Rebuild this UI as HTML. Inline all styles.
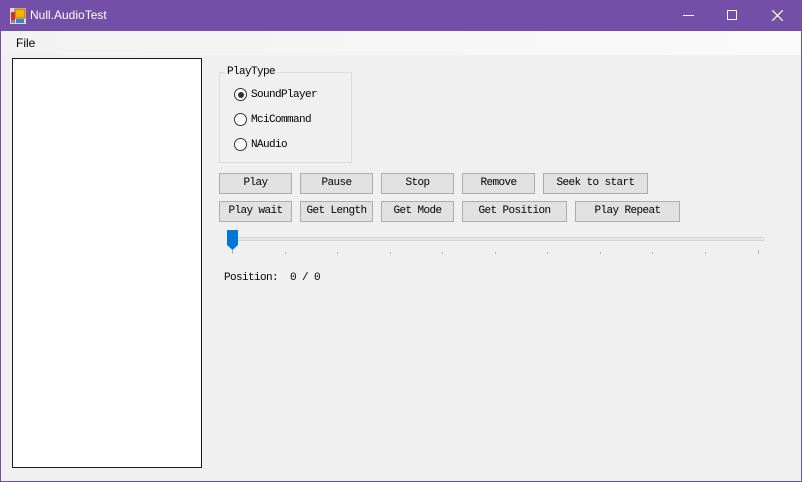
<!DOCTYPE html>
<html><head><meta charset="utf-8"><style>
*{margin:0;padding:0;box-sizing:border-box}
body{width:802px;height:482px;background:#f0f0f0;position:relative;overflow:hidden;font-family:"Liberation Mono",monospace;font-size:11px;letter-spacing:-0.6px;color:#000}
.a{position:absolute}
.title{left:0;top:0;width:802px;height:31px;background:#744fa8;color:#fff;font-family:"Liberation Sans",sans-serif;font-size:12px;letter-spacing:0}
.menu{left:1px;top:31px;width:800px;height:24px;background:linear-gradient(90deg,#f2f2f2,#fafafa);font-family:"Liberation Sans",sans-serif;font-size:12px;letter-spacing:0}
.btn{position:absolute;height:21px;background:#e1e1e1;border:1px solid #adadad;text-align:center;line-height:19px}
.rb{position:absolute;width:13px;height:13px;border:1px solid #333;border-radius:50%;background:#fff}
</style></head><body>
<div class="a title">
 <svg class="a" style="left:10px;top:8px" width="16" height="16"><rect x="0" y="0" width="16" height="16" fill="#d8d8e8"/><rect x="5" y="1" width="10" height="9" fill="#f4b400" stroke="#b07000"/><rect x="1" y="4" width="4" height="8" fill="#d03030"/><rect x="6" y="11" width="8" height="4" fill="#4080d0"/><rect x="1" y="12" width="4" height="3" fill="#888"/></svg>
 <div class="a" style="left:30px;top:8px">Null.AudioTest</div>
 <div class="a" style="left:683px;top:15px;width:11px;height:1px;background:#fff"></div>
 <div class="a" style="left:727px;top:10px;width:10px;height:10px;border:1px solid #fff"></div>
 <svg class="a" style="left:772px;top:10px" width="11" height="11"><path d="M0 0L11 11M11 0L0 11" stroke="#fff" stroke-width="1.2"/></svg>
</div>
<div class="a" style="left:0;top:31px;width:1px;height:451px;background:#744fa8"></div>
<div class="a" style="right:0;top:31px;width:1px;height:451px;background:#744fa8"></div>
<div class="a" style="left:0;top:481px;width:802px;height:1px;background:#744fa8"></div>
<div class="a menu"><div class="a" style="left:15px;top:5px">File</div></div>
<div class="a" style="left:12px;top:58px;width:190px;height:410px;background:#fff;border:1px solid #1a1a1a"></div>
<div class="a" style="left:219px;top:72px;width:133px;height:91px;border:1px solid #dcdcdc"></div>
<div class="a" style="left:225px;top:65px;background:#f0f0f0;padding:0 2px;line-height:14px">PlayType</div>
<div class="rb" style="left:234px;top:88px"><div class="a" style="left:2.5px;top:2.5px;width:6px;height:6px;border-radius:50%;background:#333"></div></div>
<div class="a" style="left:251px;top:88px;line-height:15px">SoundPlayer</div>
<div class="rb" style="left:234px;top:113px"></div>
<div class="a" style="left:251px;top:113px;line-height:15px">MciCommand</div>
<div class="rb" style="left:234px;top:138px"></div>
<div class="a" style="left:251px;top:138px;line-height:15px">NAudio</div>
<div class="btn" style="left:219px;top:173px;width:73px">Play</div>
<div class="btn" style="left:300px;top:173px;width:73px">Pause</div>
<div class="btn" style="left:381px;top:173px;width:73px">Stop</div>
<div class="btn" style="left:462px;top:173px;width:73px">Remove</div>
<div class="btn" style="left:543px;top:173px;width:105px">Seek to start</div>
<div class="btn" style="left:219px;top:201px;width:73px">Play wait</div>
<div class="btn" style="left:300px;top:201px;width:73px">Get Length</div>
<div class="btn" style="left:381px;top:201px;width:73px">Get Mode</div>
<div class="btn" style="left:462px;top:201px;width:105px">Get Position</div>
<div class="btn" style="left:575px;top:201px;width:105px">Play Repeat</div>
<div class="a" style="left:227px;top:237px;width:537px;height:4px;background:#e7e7e7;border:1px solid #d6d6d6"></div>
<svg class="a" style="left:227px;top:230px" width="11" height="20"><path d="M0 0H11V15L5.5 20L0 15Z" fill="#0078d7"/></svg>
<svg class="a" style="left:0;top:250px" width="802" height="5">
<g stroke="#b0b0b0"><path d="M232.5 0v4M285.5 2v2M337.5 2v2M390.5 2v2M442.5 2v2M495.5 2v2M547.5 2v2M600.5 2v2M652.5 2v2M705.5 2v2M758.5 0v4"/></g></svg>
<div class="a" style="left:224px;top:271px;line-height:15px;white-space:pre">Position:  0 / 0</div>
</body></html>
